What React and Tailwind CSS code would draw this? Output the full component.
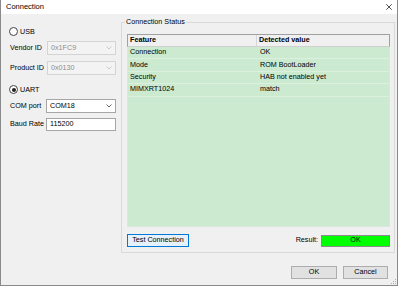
import React from 'react'

const FONT = { fontFamily: '"Liberation Sans", Arial, sans-serif' }

const ROWS = [
  ['Connection', 'OK'],
  ['Mode', 'ROM BootLoader'],
  ['Security', 'HAB not enabled yet'],
  ['MIMXRT1024', 'match'],
]

function Chevron({ color }) {
  return (
    <svg width="6" height="4" viewBox="0 0 6 4" className="ml-auto mr-[3px]">
      <polyline points="0.5,0.5 3,3 5.5,0.5" fill="none" stroke={color} strokeWidth="0.9" />
    </svg>
  )
}

function Radio({ checked, label }) {
  return (
    <div className="flex items-center h-[9px] pl-[8px] gap-[2px]">
      <span className="w-[9px] h-[9px] rounded-full border border-[#444] bg-white flex items-center justify-center">
        {checked && <span className="w-[4px] h-[4px] rounded-full bg-[#222]" />}
      </span>
      <span className="text-[7.2px] leading-[9px] text-black">{label}</span>
    </div>
  )
}

function Combo({ value, disabled, labelW, boxW, label }) {
  return (
    <div className="flex items-center h-[14px] pl-[9px]">
      <span className={`${labelW} text-[7.2px] text-black`}>{label}</span>
      <div
        className={`${boxW} h-[14px] flex items-center border pl-[3px] text-[7.2px] ${
          disabled ? 'bg-[#f3f3f3] border-[#d4d4d4] text-[#8e8e8e]' : 'bg-white border-[#a6a6a6] text-black'
        }`}
      >
        {value}
        <Chevron color={disabled ? '#c4c4c4' : '#555'} />
      </div>
    </div>
  )
}

export default function App() {
  return (
    <div className="w-[399px] h-[287px] bg-white" style={FONT}>
      <div className="w-[398px] h-[286px] border-l border-r border-b border-[#8a8a8a] flex flex-col">
        {/* title bar */}
        <div className="h-[14px] bg-white flex items-center pl-[5px] shrink-0">
          <span className="text-[7.5px] text-black">Connection</span>
          <svg width="6" height="6" viewBox="0 0 6 6" className="ml-auto mr-[5px]">
            <path d="M0.3 0.3 L5.7 5.7 M5.7 0.3 L0.3 5.7" stroke="#222" strokeWidth="0.8" />
          </svg>
        </div>

        {/* body */}
        <div className="flex-1 bg-[#f0f0f0] flex flex-col relative">
          <div className="flex">
            {/* left panel */}
            <div className="w-[120px] flex flex-col">
              <div className="mt-[13px]"><Radio label="USB" /></div>
              <div className="mt-[5px]">
                <Combo label="Vendor ID" value="0x1FC9" disabled labelW="w-[37px]" boxW="w-[69px]" />
              </div>
              <div className="mt-[6px]">
                <Combo label="Product ID" value="0x0130" disabled labelW="w-[37px]" boxW="w-[69px]" />
              </div>
              <div className="mt-[10px]"><Radio label="UART" checked /></div>
              <div className="mt-[5px]">
                <Combo label="COM port" value="COM18" labelW="w-[36px]" boxW="w-[70px]" />
              </div>
              <div className="mt-[5px] flex items-center h-[13px] pl-[9px]">
                <span className="w-[36px] text-[7.2px] text-black">Baud Rate</span>
                <div className="w-[70px] h-[13px] flex items-center bg-white border border-[#a6a6a6] pl-[3px] text-[7.2px] text-black">
                  115200
                </div>
              </div>
            </div>

            {/* connection status group */}
            <fieldset className="mt-[3px] w-[274px] h-[236px] border border-[#d9d9d9]">
              <legend className="ml-[3px] px-[1px] text-[7.2px] leading-[10px] text-black">Connection Status</legend>

              <div className="mt-[7px] ml-[5px] w-[263px] h-[193px] flex flex-col">
                <div className="h-[13px] flex border-t border-l border-r border-b border-t-[#a0a0a0] border-l-[#a0a0a0] border-r-[#a0a0a0] border-b-[#d0d0d0] bg-[#f0f0f0] shrink-0">
                  <div className="w-[129px] border-r border-[#d6d6d6] pl-[2px] flex items-center text-[7.2px] font-bold text-black">
                    Feature
                  </div>
                  <div className="flex-1 pl-[2px] flex items-center text-[7.2px] font-bold text-black">Detected value</div>
                </div>
                <div className="flex-1 bg-[#cbead0] border-l border-r border-b border-[#d8e8da]">
                  {ROWS.map(([f, v]) => (
                    <div key={f} className="h-[12.4px] flex items-center border-b border-[#dbf1de] text-[7.2px] text-black">
                      <span className="w-[130px] pl-[2px]">{f}</span>
                      <span className="pl-[2px]">{v}</span>
                    </div>
                  ))}
                </div>
              </div>

              <div className="mt-[7px] ml-[5px] w-[263px] flex items-center">
                <button className="w-[62px] h-[13px] border border-[#0078d7] bg-[#e5f1fb] text-[7.2px] text-black flex items-center justify-center">
                  Test Connection
                </button>
                <span className="ml-auto text-[7.2px] text-black mr-[3px]">Result:</span>
                <div className="w-[69px] h-[12px] border border-[#8c8c8c] bg-[#00ff00] flex items-center justify-center text-[7.2px] text-black">
                  OK
                </div>
              </div>
            </fieldset>
          </div>

          {/* dialog buttons */}
          <div className="mt-[13px] flex justify-end gap-[6px] pr-[9px]">
            <button className="w-[46px] h-[13px] border border-[#adadad] bg-[#e1e1e1] text-[7.2px] text-black flex items-center justify-center">
              OK
            </button>
            <button className="w-[45px] h-[13px] border border-[#adadad] bg-[#e1e1e1] text-[7.2px] text-black flex items-center justify-center">
              Cancel
            </button>
          </div>

          {/* size grip */}
          <svg width="5" height="5" viewBox="0 0 5 5" className="absolute right-[1px] bottom-[1px]">
            <rect x="4" y="0" width="1" height="1" fill="#b0b0b0" />
            <rect x="2" y="2" width="1" height="1" fill="#b0b0b0" />
            <rect x="4" y="2" width="1" height="1" fill="#b0b0b0" />
            <rect x="0" y="4" width="1" height="1" fill="#b0b0b0" />
            <rect x="2" y="4" width="1" height="1" fill="#b0b0b0" />
            <rect x="4" y="4" width="1" height="1" fill="#b0b0b0" />
          </svg>
        </div>
      </div>
    </div>
  )
}
